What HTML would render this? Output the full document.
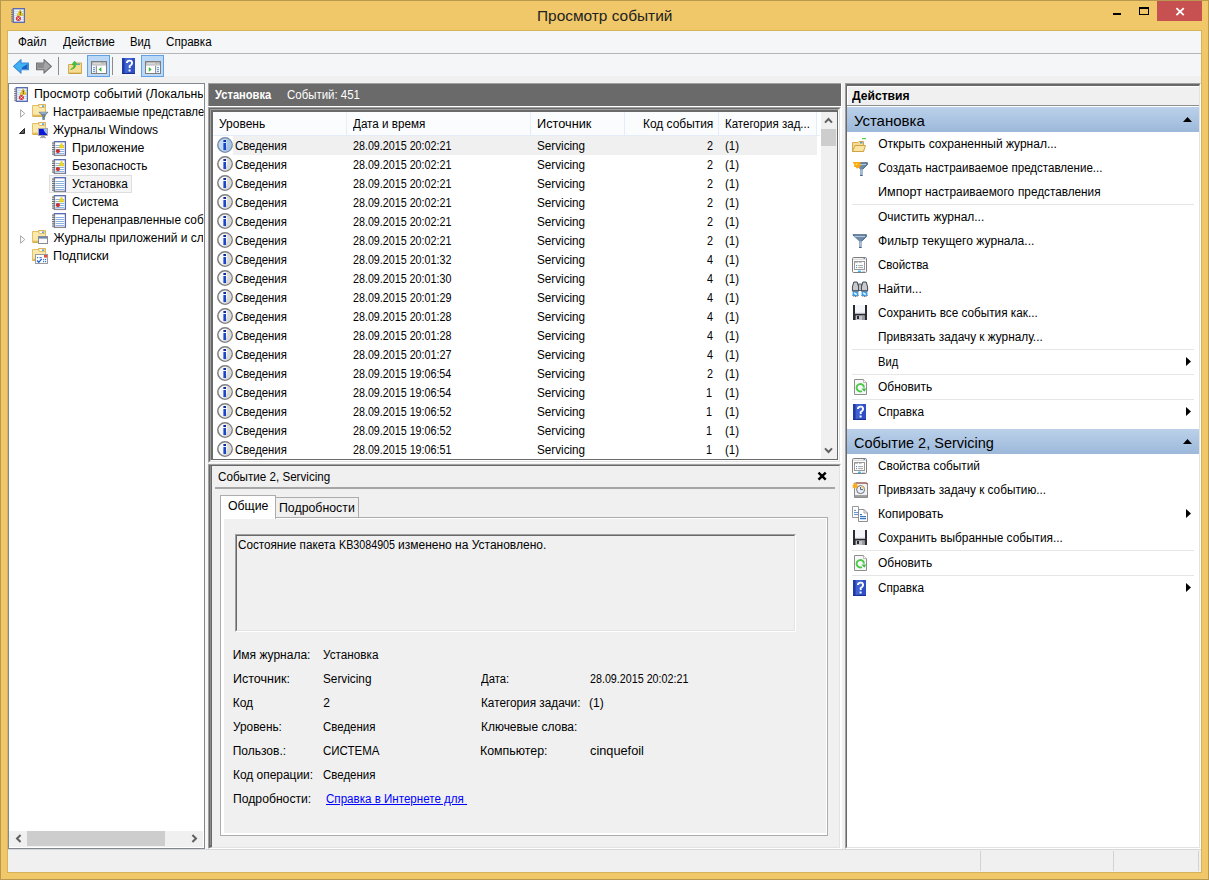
<!DOCTYPE html>
<html lang="ru"><head><meta charset="utf-8"><title>Просмотр событий</title>
<style>
html,body{margin:0;padding:0;width:1209px;height:880px;overflow:hidden;background:#F0C869;}
#win{position:absolute;left:0;top:0;width:1209px;height:880px;overflow:hidden;background:#F0C869;font-family:"Liberation Sans",sans-serif;font-size:12px;color:#000;}
#win div{position:absolute;box-sizing:border-box;}
#win svg{position:absolute;overflow:visible;}
.t{position:absolute;white-space:pre;line-height:16px;height:16px;transform-origin:0 0;}

</style></head>
<body>
<div id="win">
<div style="left:0px;top:0px;width:1209px;height:880px;background:#F0C869;border:1px solid #B8994F;"></div>
<div style="left:7px;top:30px;width:1195px;height:843px;background:#F0F0F0;border:1px solid #D6B25A;"></div>
<svg style="left:11px;top:8px" width="14" height="15" viewBox="0 0 14 15" ><rect x="2.2" y="0.6" width="11.2" height="13.8" fill="#C9D8F0" stroke="#5A6CB0" stroke-width="1.2"/><path d="M3.4 2.5 H12.4" stroke="#F4F8FF" stroke-width="0.9"/><path d="M3.4 4.5 H12.4" stroke="#F4F8FF" stroke-width="0.9"/><path d="M3.4 6.5 H12.4" stroke="#F4F8FF" stroke-width="0.9"/><path d="M3.4 8.5 H12.4" stroke="#F4F8FF" stroke-width="0.9"/><path d="M3.4 10.5 H12.4" stroke="#F4F8FF" stroke-width="0.9"/><path d="M3.4 12.5 H12.4" stroke="#F4F8FF" stroke-width="0.9"/><rect x="0" y="1.6" width="3" height="1.1" fill="#7A7A84"/><rect x="0" y="3.8" width="3" height="1.1" fill="#7A7A84"/><rect x="0" y="6.0" width="3" height="1.1" fill="#7A7A84"/><rect x="0" y="8.2" width="3" height="1.1" fill="#7A7A84"/><rect x="0" y="10.4" width="3" height="1.1" fill="#7A7A84"/><rect x="0" y="12.6" width="3" height="1.1" fill="#7A7A84"/><path d="M9.2 1.8 L12.2 7.3 H6.2 Z" fill="#F8D820" stroke="#D8B000" stroke-width="0.7"/><rect x="8.8" y="3.6" width="0.9" height="2" fill="#222"/><rect x="8.8" y="6" width="0.9" height="0.8" fill="#222"/><circle cx="7.4" cy="10.5" r="2.5" fill="#D63030"/><path d="M6.4 9.5 L8.4 11.5 M8.4 9.5 L6.4 11.5" stroke="#fff" stroke-width="0.9"/></svg>
<div style="left:1157px;top:1px;width:45px;height:20px;background:#C75050;"></div>
<svg style="left:1175px;top:7px" width="10" height="9" viewBox="0 0 10 9"><path d="M1.4 1.2 L8.8 8.2 M8.8 1.2 L1.4 8.2" stroke="#fff" stroke-width="1.8" fill="none"/></svg>
<div style="left:1139px;top:7px;width:10px;height:8px;border:1px solid #000;border-top-width:2px;"></div>
<div style="left:1113px;top:13px;width:8px;height:2px;background:#000;"></div>
<div style="left:8px;top:31px;width:1193px;height:22px;background:#F5F6F7;"></div>
<div style="left:8px;top:53px;width:1193px;height:1px;background:#B6B6B6;"></div>
<div style="left:8px;top:54px;width:1193px;height:22px;background:#F5F6F7;"></div>
<div style="left:58px;top:57px;width:1px;height:18px;background:#8D8D8D;"></div>
<div style="left:112px;top:57px;width:1px;height:18px;background:#8D8D8D;"></div>
<div style="left:87px;top:55px;width:23px;height:22px;background:#BBD9F7;border:1px solid #62A2E4;"></div>
<div style="left:141px;top:55px;width:23px;height:22px;background:#BBD9F7;border:1px solid #62A2E4;"></div>
<svg style="left:13px;top:59px" width="16" height="15" viewBox="0 0 16 15" ><path d="M0.6 7.4 L8 0.6 V4 H15.4 V10.8 H8 V14.2 Z" fill="#3FB2F4" stroke="#3D86D6" stroke-width="1.1" stroke-linejoin="round"/><path d="M9 8.5 L14.5 5 V10 H9 Z" fill="#1C5FC0"/></svg>
<svg style="left:36px;top:59px" width="16" height="15" viewBox="0 0 16 15" ><path d="M15.4 7.4 L8 0.6 V4 H0.6 V10.8 H8 V14.2 Z" fill="#A6A6A6" stroke="#6E6E6E" stroke-width="1.1" stroke-linejoin="round"/><path d="M1.5 5 H8 V9 H1.5 Z" fill="#8C8C8C"/></svg>
<svg style="left:68px;top:61px" width="14" height="13" viewBox="0 0 14 13" ><path d="M0.5 3.5 H5 L6.5 2 H13.5 V12.5 H0.5 Z" fill="#F6DC92" stroke="#D2AA50" stroke-width="1"/><rect x="9.5" y="2.6" width="2.5" height="1.2" fill="#3D8FE8"/><path d="M1 12.2 H13" stroke="#C39A3C" stroke-width="1"/><path d="M2.5 8.5 Q6 7 6 3.5 H4 L6.5 0 L9.5 3.5 H7.8 Q7.5 8 2.5 8.5 Z" fill="#3CC83C" stroke="#28A028" stroke-width="0.5"/></svg>
<svg style="left:91px;top:61px" width="16" height="13" viewBox="0 0 16 13" ><rect x="0.5" y="0.5" width="15" height="12" fill="#fff" stroke="#7E7E7E" stroke-width="1"/><rect x="1" y="1" width="14" height="2.6" fill="#A4A4A4"/><path d="M1.5 2.2 H10.5" stroke="#F0F0F0" stroke-width="1"/><rect x="11.5" y="1.6" width="1" height="1" fill="#fff"/><rect x="13.3" y="1.6" width="1" height="1" fill="#fff"/><path d="M1 4.4 H15" stroke="#C8C8C8" stroke-width="0.8"/><path d="M5.3 4.8 V12" stroke="#7E7E7E" stroke-width="1"/><rect x="2" y="6.2" width="2" height="1" fill="#4A86D8"/><rect x="2" y="8.2" width="2" height="1" fill="#4A86D8"/><rect x="2" y="10.2" width="2" height="1" fill="#4A86D8"/><path d="M7.6 8.4 L10.4 6 V10.8 Z" fill="#2DB82D"/><rect x="6" y="5" width="9" height="7" fill="none"/></svg>
<svg style="left:122px;top:58px" width="13" height="16" viewBox="0 0 13 16" ><rect x="0" y="0" width="13" height="16" fill="#3E62D2"/><rect x="0" y="0" width="2.6" height="16" fill="#1F3CA8"/><path d="M10 0 H13 V16 H3 Q11 12 10 0 Z" fill="#2E50C4"/><rect x="0" y="15" width="13" height="1" fill="#1A3090"/><path d="M4.9 5 Q5.1 2.6 7.5 2.6 Q10.1 2.6 10.1 5 Q10.1 6.8 7.7 8 V10" stroke="#fff" stroke-width="1.9" fill="none"/><rect x="6.6" y="11.5" width="2" height="2" fill="#fff"/></svg>
<svg style="left:145px;top:61px" width="16" height="13" viewBox="0 0 16 13" ><rect x="0.5" y="0.5" width="15" height="12" fill="#fff" stroke="#7E7E7E" stroke-width="1"/><rect x="1" y="1" width="14" height="2.6" fill="#A4A4A4"/><path d="M1.5 2.2 H10.5" stroke="#F0F0F0" stroke-width="1"/><rect x="11.5" y="1.6" width="1" height="1" fill="#fff"/><rect x="13.3" y="1.6" width="1" height="1" fill="#fff"/><path d="M1 4.4 H15" stroke="#C8C8C8" stroke-width="0.8"/><path d="M10.7 4.8 V12" stroke="#7E7E7E" stroke-width="1"/><rect x="12" y="6.2" width="2" height="1" fill="#4A86D8"/><rect x="12" y="8.2" width="2" height="1" fill="#4A86D8"/><rect x="12" y="10.2" width="2" height="1" fill="#4A86D8"/><path d="M6.6 8.4 L3.8 6 V10.8 Z" fill="#2DB82D"/></svg>
<div style="left:8px;top:83px;width:197px;height:766px;background:#fff;border:1px solid #828790;"></div>
<div style="left:9px;top:831px;width:194px;height:16px;background:#F0F0F0;"></div>
<div style="left:27px;top:831px;width:138px;height:15px;background:#CDCDCD;"></div>
<svg style="left:15px;top:834px" width="7" height="9" viewBox="0 0 7 9"><path d="M5.6 1 L2 4.5 L5.6 8" stroke="#606060" stroke-width="2" fill="none"/></svg>
<svg style="left:191px;top:834px" width="7" height="9" viewBox="0 0 7 9"><path d="M1.4 1 L5 4.5 L1.4 8" stroke="#606060" stroke-width="2" fill="none"/></svg>
<div style="left:49px;top:175px;width:83px;height:18px;background:#F5F5F5;border:1px solid #DEDEDE;"></div>
<svg style="left:14px;top:87px" width="14" height="15" viewBox="0 0 14 15" ><rect x="2.2" y="0.6" width="11.2" height="13.8" fill="#C9D8F0" stroke="#5A6CB0" stroke-width="1.2"/><path d="M3.4 2.5 H12.4" stroke="#F4F8FF" stroke-width="0.9"/><path d="M3.4 4.5 H12.4" stroke="#F4F8FF" stroke-width="0.9"/><path d="M3.4 6.5 H12.4" stroke="#F4F8FF" stroke-width="0.9"/><path d="M3.4 8.5 H12.4" stroke="#F4F8FF" stroke-width="0.9"/><path d="M3.4 10.5 H12.4" stroke="#F4F8FF" stroke-width="0.9"/><path d="M3.4 12.5 H12.4" stroke="#F4F8FF" stroke-width="0.9"/><rect x="0" y="1.6" width="3" height="1.1" fill="#7A7A84"/><rect x="0" y="3.8" width="3" height="1.1" fill="#7A7A84"/><rect x="0" y="6.0" width="3" height="1.1" fill="#7A7A84"/><rect x="0" y="8.2" width="3" height="1.1" fill="#7A7A84"/><rect x="0" y="10.4" width="3" height="1.1" fill="#7A7A84"/><rect x="0" y="12.6" width="3" height="1.1" fill="#7A7A84"/><path d="M9.2 1.8 L12.2 7.3 H6.2 Z" fill="#F8D820" stroke="#D8B000" stroke-width="0.7"/><rect x="8.8" y="3.6" width="0.9" height="2" fill="#222"/><rect x="8.8" y="6" width="0.9" height="0.8" fill="#222"/><circle cx="7.4" cy="10.5" r="2.5" fill="#D63030"/><path d="M6.4 9.5 L8.4 11.5 M8.4 9.5 L6.4 11.5" stroke="#fff" stroke-width="0.9"/></svg>
<svg style="left:32px;top:104px" width="16" height="16" viewBox="0 0 16 16" ><path d="M6.5 0.5 H13.5 V4 H6.5 Z" fill="#F3D88A" stroke="#D9B65E" stroke-width="1"/><rect x="7.6" y="1.4" width="4.6" height="1.6" fill="#fff"/><rect x="10" y="1.5" width="2" height="1.3" fill="#3D8FE8"/><path d="M0.5 1.5 H6 L7.5 3.5 H13.5 V12.5 H0.5 Z" fill="#FBE9AC" stroke="#E2C068" stroke-width="1"/><path d="M1 10 H13 V12 H1 Z" fill="#F5D98C"/><path d="M1 12 H13" stroke="#C99E3E" stroke-width="1"/><path d="M7 8.2 H16 L12.5 12 V15.6 H10.7 V12 Z" fill="#6F8CA8" stroke="#4D6782" stroke-width="0.6"/><path d="M8.5 9 H14.5" stroke="#C8D8E8" stroke-width="0.8"/></svg>
<svg style="left:32px;top:122px" width="16" height="16" viewBox="0 0 16 16" ><path d="M6.5 0.5 H13.5 V4 H6.5 Z" fill="#F3D88A" stroke="#D9B65E" stroke-width="1"/><rect x="7.6" y="1.4" width="4.6" height="1.6" fill="#fff"/><rect x="10" y="1.5" width="2" height="1.3" fill="#3D8FE8"/><path d="M0.5 1.5 H6 L7.5 3.5 H13.5 V12.5 H0.5 Z" fill="#FBE9AC" stroke="#E2C068" stroke-width="1"/><path d="M1 10 H13 V12 H1 Z" fill="#F5D98C"/><path d="M1 12 H13" stroke="#C99E3E" stroke-width="1"/><rect x="6.5" y="6.5" width="9" height="7" fill="#0A18D8" stroke="#A8A8A8" stroke-width="1"/><path d="M11.5 7 H15 V12 Q12.5 11 11.5 7 Z" fill="#9DB8F5"/><path d="M9 14.5 H13 M8 15.6 H14" stroke="#9A9A9A" stroke-width="0.9"/></svg>
<svg style="left:52px;top:141px" width="14" height="15" viewBox="0 0 14 15" ><rect x="2.4" y="0.7" width="11" height="13.7" fill="#fff" stroke="#5568B0" stroke-width="1.3"/><path d="M2.4 14.5 H13.4" stroke="#8A8A8A" stroke-width="1"/><path d="M2.6 1.4 V14" stroke="#B0B0B0" stroke-width="0.8"/><path d="M3.5 4.5 H12" stroke="#8DB4DC" stroke-width="1"/><path d="M3.5 6.5 H12" stroke="#8DB4DC" stroke-width="1"/><path d="M3.5 8.5 H12" stroke="#8DB4DC" stroke-width="1"/><path d="M3.5 10.5 H12" stroke="#8DB4DC" stroke-width="1"/><path d="M3.5 12.5 H12" stroke="#8DB4DC" stroke-width="1"/><rect x="0" y="1.5" width="3" height="1.2" fill="#6E6E6E"/><rect x="0" y="3.7" width="3" height="1.2" fill="#6E6E6E"/><rect x="0" y="5.9" width="3" height="1.2" fill="#6E6E6E"/><rect x="0" y="8.1" width="3" height="1.2" fill="#6E6E6E"/><rect x="0" y="10.3" width="3" height="1.2" fill="#6E6E6E"/><rect x="0" y="12.5" width="3" height="1.2" fill="#6E6E6E"/><path d="M9.5 2 L12 6.8 H7 Z" fill="#F7DE1E" stroke="#E0C000" stroke-width="0.6"/><circle cx="5.9" cy="10.1" r="2.1" fill="#CC3030"/></svg>
<svg style="left:52px;top:159px" width="14" height="15" viewBox="0 0 14 15" ><rect x="2.4" y="0.7" width="11" height="13.7" fill="#fff" stroke="#5568B0" stroke-width="1.3"/><path d="M2.4 14.5 H13.4" stroke="#8A8A8A" stroke-width="1"/><path d="M2.6 1.4 V14" stroke="#B0B0B0" stroke-width="0.8"/><path d="M3.5 4.5 H12" stroke="#8DB4DC" stroke-width="1"/><path d="M3.5 6.5 H12" stroke="#8DB4DC" stroke-width="1"/><path d="M3.5 8.5 H12" stroke="#8DB4DC" stroke-width="1"/><path d="M3.5 10.5 H12" stroke="#8DB4DC" stroke-width="1"/><path d="M3.5 12.5 H12" stroke="#8DB4DC" stroke-width="1"/><rect x="0" y="1.5" width="3" height="1.2" fill="#6E6E6E"/><rect x="0" y="3.7" width="3" height="1.2" fill="#6E6E6E"/><rect x="0" y="5.9" width="3" height="1.2" fill="#6E6E6E"/><rect x="0" y="8.1" width="3" height="1.2" fill="#6E6E6E"/><rect x="0" y="10.3" width="3" height="1.2" fill="#6E6E6E"/><rect x="0" y="12.5" width="3" height="1.2" fill="#6E6E6E"/><path d="M9.5 2 L12 6.8 H7 Z" fill="#F7DE1E" stroke="#E0C000" stroke-width="0.6"/><circle cx="5.9" cy="10.1" r="2.1" fill="#CC3030"/></svg>
<svg style="left:52px;top:177px" width="14" height="15" viewBox="0 0 14 15" ><rect x="2.4" y="0.7" width="11" height="13.7" fill="#fff" stroke="#5568B0" stroke-width="1.3"/><path d="M2.4 14.5 H13.4" stroke="#8A8A8A" stroke-width="1"/><path d="M2.6 1.4 V14" stroke="#B0B0B0" stroke-width="0.8"/><path d="M3.5 4.5 H12" stroke="#8DB4DC" stroke-width="1"/><path d="M3.5 6.5 H12" stroke="#8DB4DC" stroke-width="1"/><path d="M3.5 8.5 H12" stroke="#8DB4DC" stroke-width="1"/><path d="M3.5 10.5 H12" stroke="#8DB4DC" stroke-width="1"/><path d="M3.5 12.5 H12" stroke="#8DB4DC" stroke-width="1"/><rect x="0" y="1.5" width="3" height="1.2" fill="#6E6E6E"/><rect x="0" y="3.7" width="3" height="1.2" fill="#6E6E6E"/><rect x="0" y="5.9" width="3" height="1.2" fill="#6E6E6E"/><rect x="0" y="8.1" width="3" height="1.2" fill="#6E6E6E"/><rect x="0" y="10.3" width="3" height="1.2" fill="#6E6E6E"/><rect x="0" y="12.5" width="3" height="1.2" fill="#6E6E6E"/></svg>
<svg style="left:52px;top:195px" width="14" height="15" viewBox="0 0 14 15" ><rect x="2.4" y="0.7" width="11" height="13.7" fill="#fff" stroke="#5568B0" stroke-width="1.3"/><path d="M2.4 14.5 H13.4" stroke="#8A8A8A" stroke-width="1"/><path d="M2.6 1.4 V14" stroke="#B0B0B0" stroke-width="0.8"/><path d="M3.5 4.5 H12" stroke="#8DB4DC" stroke-width="1"/><path d="M3.5 6.5 H12" stroke="#8DB4DC" stroke-width="1"/><path d="M3.5 8.5 H12" stroke="#8DB4DC" stroke-width="1"/><path d="M3.5 10.5 H12" stroke="#8DB4DC" stroke-width="1"/><path d="M3.5 12.5 H12" stroke="#8DB4DC" stroke-width="1"/><rect x="0" y="1.5" width="3" height="1.2" fill="#6E6E6E"/><rect x="0" y="3.7" width="3" height="1.2" fill="#6E6E6E"/><rect x="0" y="5.9" width="3" height="1.2" fill="#6E6E6E"/><rect x="0" y="8.1" width="3" height="1.2" fill="#6E6E6E"/><rect x="0" y="10.3" width="3" height="1.2" fill="#6E6E6E"/><rect x="0" y="12.5" width="3" height="1.2" fill="#6E6E6E"/><path d="M9.5 2 L12 6.8 H7 Z" fill="#F7DE1E" stroke="#E0C000" stroke-width="0.6"/><circle cx="5.9" cy="10.1" r="2.1" fill="#CC3030"/></svg>
<svg style="left:52px;top:213px" width="14" height="15" viewBox="0 0 14 15" ><rect x="2.4" y="0.7" width="11" height="13.7" fill="#fff" stroke="#5568B0" stroke-width="1.3"/><path d="M2.4 14.5 H13.4" stroke="#8A8A8A" stroke-width="1"/><path d="M2.6 1.4 V14" stroke="#B0B0B0" stroke-width="0.8"/><path d="M3.5 4.5 H12" stroke="#8DB4DC" stroke-width="1"/><path d="M3.5 6.5 H12" stroke="#8DB4DC" stroke-width="1"/><path d="M3.5 8.5 H12" stroke="#8DB4DC" stroke-width="1"/><path d="M3.5 10.5 H12" stroke="#8DB4DC" stroke-width="1"/><path d="M3.5 12.5 H12" stroke="#8DB4DC" stroke-width="1"/><rect x="0" y="1.5" width="3" height="1.2" fill="#6E6E6E"/><rect x="0" y="3.7" width="3" height="1.2" fill="#6E6E6E"/><rect x="0" y="5.9" width="3" height="1.2" fill="#6E6E6E"/><rect x="0" y="8.1" width="3" height="1.2" fill="#6E6E6E"/><rect x="0" y="10.3" width="3" height="1.2" fill="#6E6E6E"/><rect x="0" y="12.5" width="3" height="1.2" fill="#6E6E6E"/></svg>
<svg style="left:32px;top:230px" width="16" height="16" viewBox="0 0 16 16" ><path d="M6.5 0.5 H13.5 V4 H6.5 Z" fill="#F3D88A" stroke="#D9B65E" stroke-width="1"/><rect x="7.6" y="1.4" width="4.6" height="1.6" fill="#fff"/><rect x="10" y="1.5" width="2" height="1.3" fill="#3D8FE8"/><path d="M0.5 1.5 H6 L7.5 3.5 H13.5 V12.5 H0.5 Z" fill="#FBE9AC" stroke="#E2C068" stroke-width="1"/><path d="M1 10 H13 V12 H1 Z" fill="#F5D98C"/><path d="M1 12 H13" stroke="#C99E3E" stroke-width="1"/><rect x="6.5" y="6.5" width="9" height="7" fill="#FAFAFC" stroke="#8A8A94" stroke-width="1"/><rect x="7" y="7" width="8" height="1.6" fill="#6F86A8"/></svg>
<svg style="left:32px;top:248px" width="16" height="16" viewBox="0 0 16 16" ><path d="M6.5 0.5 H13.5 V4 H6.5 Z" fill="#F3D88A" stroke="#D9B65E" stroke-width="1"/><rect x="7.6" y="1.4" width="4.6" height="1.6" fill="#fff"/><rect x="10" y="1.5" width="2" height="1.3" fill="#3D8FE8"/><path d="M0.5 1.5 H6 L7.5 3.5 H13.5 V12.5 H0.5 Z" fill="#FBE9AC" stroke="#E2C068" stroke-width="1"/><path d="M1 10 H13 V12 H1 Z" fill="#F5D98C"/><path d="M1 12 H13" stroke="#C99E3E" stroke-width="1"/><rect x="3.5" y="6.5" width="12" height="9" fill="#fff" stroke="#9A9A9A" stroke-width="1"/><rect x="12" y="7" width="3" height="2.6" fill="#E84A3A"/><rect x="5" y="9" width="1.2" height="1.2" fill="#3A78D0"/><rect x="7.4" y="9.1" width="2.4" height="1" fill="#3A78D0"/><rect x="11" y="11" width="1.2" height="1.2" fill="#3A78D0"/><rect x="13" y="11" width="1.2" height="1.2" fill="#3A78D0"/><rect x="11" y="13" width="1.2" height="1.2" fill="#3A78D0"/><rect x="13" y="13" width="1.2" height="1.2" fill="#3A78D0"/><path d="M5 12.5 L6.8 14.3 L9.6 10.8" stroke="#2060C8" stroke-width="1.3" fill="none"/></svg>
<svg style="left:20px;top:109px" width="6" height="9" viewBox="0 0 6 9"><path d="M0.6 0.8 L4.8 4.5 L0.6 8.2 Z" fill="#fff" stroke="#A6A6A6" stroke-width="1"/></svg>
<svg style="left:20px;top:235px" width="6" height="9" viewBox="0 0 6 9"><path d="M0.6 0.8 L4.8 4.5 L0.6 8.2 Z" fill="#fff" stroke="#A6A6A6" stroke-width="1"/></svg>
<svg style="left:19px;top:128px" width="6" height="6" viewBox="0 0 6 6"><path d="M5.5 0.5 V5.5 H0.5 Z" fill="#595959" stroke="#262626" stroke-width="1"/></svg>
<div style="left:205px;top:83px;width:3px;height:766px;background:#F6F6F6;"></div>
<div style="left:841px;top:83px;width:4px;height:766px;background:#F0F0F0;border-left:1px solid #fff;"></div>
<div style="left:208px;top:83px;width:633px;height:23px;background:#6A6A6A;border-left:1px solid #A0A0A0;border-top:1px solid #A0A0A0;"></div>
<div style="left:208px;top:106px;width:633px;height:1px;background:#fff;"></div>
<div style="left:208px;top:107px;width:633px;height:356px;background:#fff;border-top:1px solid #A0A0A0;border-left:1px solid #A0A0A0;border-right:1px solid #fff;border-bottom:1px solid #fff;"></div>
<div style="left:209px;top:108px;width:631px;height:354px;border-top:1px solid #696969;border-left:1px solid #696969;border-right:1px solid #E3E3E3;border-bottom:1px solid #E3E3E3;"></div>
<div style="left:210px;top:109px;width:629px;height:352px;border-top:1px solid #A0A0A0;border-left:1px solid #A0A0A0;border-right:1px solid #fff;border-bottom:1px solid #fff;"></div>
<div style="left:211px;top:110px;width:627px;height:350px;border-top:2px solid #696969;border-left:2px solid #696969;border-right:1px solid #696969;border-bottom:1px solid #696969;"></div>
<div style="left:821px;top:112px;width:16px;height:347px;background:#F0F0F0;"></div>
<div style="left:213px;top:112px;width:604px;height:23px;background:#FBFCFE;"></div>
<div style="left:346px;top:112px;width:1px;height:23px;background:#E5EEF8;"></div>
<div style="left:530px;top:112px;width:1px;height:23px;background:#E5EEF8;"></div>
<div style="left:624px;top:112px;width:1px;height:23px;background:#E5EEF8;"></div>
<div style="left:718px;top:112px;width:1px;height:23px;background:#E5EEF8;"></div>
<div style="left:816px;top:112px;width:1px;height:23px;background:#E5EEF8;"></div>
<div style="left:213px;top:135px;width:607px;height:1px;background:#E5EEF8;"></div>
<div style="left:233px;top:136px;width:584px;height:19px;background:#F0F0F0;"></div>
<svg style="left:217px;top:137px" width="16" height="16" viewBox="0 0 16 16" ><circle cx="8" cy="8" r="7.2" fill="#C2DAF3" stroke="#7A8FAA" stroke-width="1.5"/><path d="M9.5 1.8 A6.4 6.4 0 0 1 14.4 8 A6.4 6.4 0 0 1 6 14.1 Q12.5 10 9.5 1.8 Z" fill="#A6C4E6"/><rect x="6.4" y="3" width="2.6" height="2" fill="#0A2AA0"/><rect x="6.4" y="6" width="2.6" height="7" fill="#1A48C8"/></svg>
<svg style="left:217px;top:156px" width="16" height="16" viewBox="0 0 16 16" ><circle cx="8" cy="8" r="7.2" fill="#F6F6F6" stroke="#7F7F7F" stroke-width="1.5"/><path d="M9.5 1.8 A6.4 6.4 0 0 1 14.4 8 A6.4 6.4 0 0 1 6 14.1 Q12.5 10 9.5 1.8 Z" fill="#DADADA"/><rect x="6.4" y="3" width="2.6" height="2" fill="#0A2AA0"/><rect x="6.4" y="6" width="2.6" height="7" fill="#1A48C8"/></svg>
<svg style="left:217px;top:175px" width="16" height="16" viewBox="0 0 16 16" ><circle cx="8" cy="8" r="7.2" fill="#F6F6F6" stroke="#7F7F7F" stroke-width="1.5"/><path d="M9.5 1.8 A6.4 6.4 0 0 1 14.4 8 A6.4 6.4 0 0 1 6 14.1 Q12.5 10 9.5 1.8 Z" fill="#DADADA"/><rect x="6.4" y="3" width="2.6" height="2" fill="#0A2AA0"/><rect x="6.4" y="6" width="2.6" height="7" fill="#1A48C8"/></svg>
<svg style="left:217px;top:194px" width="16" height="16" viewBox="0 0 16 16" ><circle cx="8" cy="8" r="7.2" fill="#F6F6F6" stroke="#7F7F7F" stroke-width="1.5"/><path d="M9.5 1.8 A6.4 6.4 0 0 1 14.4 8 A6.4 6.4 0 0 1 6 14.1 Q12.5 10 9.5 1.8 Z" fill="#DADADA"/><rect x="6.4" y="3" width="2.6" height="2" fill="#0A2AA0"/><rect x="6.4" y="6" width="2.6" height="7" fill="#1A48C8"/></svg>
<svg style="left:217px;top:213px" width="16" height="16" viewBox="0 0 16 16" ><circle cx="8" cy="8" r="7.2" fill="#F6F6F6" stroke="#7F7F7F" stroke-width="1.5"/><path d="M9.5 1.8 A6.4 6.4 0 0 1 14.4 8 A6.4 6.4 0 0 1 6 14.1 Q12.5 10 9.5 1.8 Z" fill="#DADADA"/><rect x="6.4" y="3" width="2.6" height="2" fill="#0A2AA0"/><rect x="6.4" y="6" width="2.6" height="7" fill="#1A48C8"/></svg>
<svg style="left:217px;top:232px" width="16" height="16" viewBox="0 0 16 16" ><circle cx="8" cy="8" r="7.2" fill="#F6F6F6" stroke="#7F7F7F" stroke-width="1.5"/><path d="M9.5 1.8 A6.4 6.4 0 0 1 14.4 8 A6.4 6.4 0 0 1 6 14.1 Q12.5 10 9.5 1.8 Z" fill="#DADADA"/><rect x="6.4" y="3" width="2.6" height="2" fill="#0A2AA0"/><rect x="6.4" y="6" width="2.6" height="7" fill="#1A48C8"/></svg>
<svg style="left:217px;top:251px" width="16" height="16" viewBox="0 0 16 16" ><circle cx="8" cy="8" r="7.2" fill="#F6F6F6" stroke="#7F7F7F" stroke-width="1.5"/><path d="M9.5 1.8 A6.4 6.4 0 0 1 14.4 8 A6.4 6.4 0 0 1 6 14.1 Q12.5 10 9.5 1.8 Z" fill="#DADADA"/><rect x="6.4" y="3" width="2.6" height="2" fill="#0A2AA0"/><rect x="6.4" y="6" width="2.6" height="7" fill="#1A48C8"/></svg>
<svg style="left:217px;top:270px" width="16" height="16" viewBox="0 0 16 16" ><circle cx="8" cy="8" r="7.2" fill="#F6F6F6" stroke="#7F7F7F" stroke-width="1.5"/><path d="M9.5 1.8 A6.4 6.4 0 0 1 14.4 8 A6.4 6.4 0 0 1 6 14.1 Q12.5 10 9.5 1.8 Z" fill="#DADADA"/><rect x="6.4" y="3" width="2.6" height="2" fill="#0A2AA0"/><rect x="6.4" y="6" width="2.6" height="7" fill="#1A48C8"/></svg>
<svg style="left:217px;top:289px" width="16" height="16" viewBox="0 0 16 16" ><circle cx="8" cy="8" r="7.2" fill="#F6F6F6" stroke="#7F7F7F" stroke-width="1.5"/><path d="M9.5 1.8 A6.4 6.4 0 0 1 14.4 8 A6.4 6.4 0 0 1 6 14.1 Q12.5 10 9.5 1.8 Z" fill="#DADADA"/><rect x="6.4" y="3" width="2.6" height="2" fill="#0A2AA0"/><rect x="6.4" y="6" width="2.6" height="7" fill="#1A48C8"/></svg>
<svg style="left:217px;top:308px" width="16" height="16" viewBox="0 0 16 16" ><circle cx="8" cy="8" r="7.2" fill="#F6F6F6" stroke="#7F7F7F" stroke-width="1.5"/><path d="M9.5 1.8 A6.4 6.4 0 0 1 14.4 8 A6.4 6.4 0 0 1 6 14.1 Q12.5 10 9.5 1.8 Z" fill="#DADADA"/><rect x="6.4" y="3" width="2.6" height="2" fill="#0A2AA0"/><rect x="6.4" y="6" width="2.6" height="7" fill="#1A48C8"/></svg>
<svg style="left:217px;top:327px" width="16" height="16" viewBox="0 0 16 16" ><circle cx="8" cy="8" r="7.2" fill="#F6F6F6" stroke="#7F7F7F" stroke-width="1.5"/><path d="M9.5 1.8 A6.4 6.4 0 0 1 14.4 8 A6.4 6.4 0 0 1 6 14.1 Q12.5 10 9.5 1.8 Z" fill="#DADADA"/><rect x="6.4" y="3" width="2.6" height="2" fill="#0A2AA0"/><rect x="6.4" y="6" width="2.6" height="7" fill="#1A48C8"/></svg>
<svg style="left:217px;top:346px" width="16" height="16" viewBox="0 0 16 16" ><circle cx="8" cy="8" r="7.2" fill="#F6F6F6" stroke="#7F7F7F" stroke-width="1.5"/><path d="M9.5 1.8 A6.4 6.4 0 0 1 14.4 8 A6.4 6.4 0 0 1 6 14.1 Q12.5 10 9.5 1.8 Z" fill="#DADADA"/><rect x="6.4" y="3" width="2.6" height="2" fill="#0A2AA0"/><rect x="6.4" y="6" width="2.6" height="7" fill="#1A48C8"/></svg>
<svg style="left:217px;top:365px" width="16" height="16" viewBox="0 0 16 16" ><circle cx="8" cy="8" r="7.2" fill="#F6F6F6" stroke="#7F7F7F" stroke-width="1.5"/><path d="M9.5 1.8 A6.4 6.4 0 0 1 14.4 8 A6.4 6.4 0 0 1 6 14.1 Q12.5 10 9.5 1.8 Z" fill="#DADADA"/><rect x="6.4" y="3" width="2.6" height="2" fill="#0A2AA0"/><rect x="6.4" y="6" width="2.6" height="7" fill="#1A48C8"/></svg>
<svg style="left:217px;top:384px" width="16" height="16" viewBox="0 0 16 16" ><circle cx="8" cy="8" r="7.2" fill="#F6F6F6" stroke="#7F7F7F" stroke-width="1.5"/><path d="M9.5 1.8 A6.4 6.4 0 0 1 14.4 8 A6.4 6.4 0 0 1 6 14.1 Q12.5 10 9.5 1.8 Z" fill="#DADADA"/><rect x="6.4" y="3" width="2.6" height="2" fill="#0A2AA0"/><rect x="6.4" y="6" width="2.6" height="7" fill="#1A48C8"/></svg>
<svg style="left:217px;top:403px" width="16" height="16" viewBox="0 0 16 16" ><circle cx="8" cy="8" r="7.2" fill="#F6F6F6" stroke="#7F7F7F" stroke-width="1.5"/><path d="M9.5 1.8 A6.4 6.4 0 0 1 14.4 8 A6.4 6.4 0 0 1 6 14.1 Q12.5 10 9.5 1.8 Z" fill="#DADADA"/><rect x="6.4" y="3" width="2.6" height="2" fill="#0A2AA0"/><rect x="6.4" y="6" width="2.6" height="7" fill="#1A48C8"/></svg>
<svg style="left:217px;top:422px" width="16" height="16" viewBox="0 0 16 16" ><circle cx="8" cy="8" r="7.2" fill="#F6F6F6" stroke="#7F7F7F" stroke-width="1.5"/><path d="M9.5 1.8 A6.4 6.4 0 0 1 14.4 8 A6.4 6.4 0 0 1 6 14.1 Q12.5 10 9.5 1.8 Z" fill="#DADADA"/><rect x="6.4" y="3" width="2.6" height="2" fill="#0A2AA0"/><rect x="6.4" y="6" width="2.6" height="7" fill="#1A48C8"/></svg>
<svg style="left:217px;top:441px" width="16" height="16" viewBox="0 0 16 16" ><circle cx="8" cy="8" r="7.2" fill="#F6F6F6" stroke="#7F7F7F" stroke-width="1.5"/><path d="M9.5 1.8 A6.4 6.4 0 0 1 14.4 8 A6.4 6.4 0 0 1 6 14.1 Q12.5 10 9.5 1.8 Z" fill="#DADADA"/><rect x="6.4" y="3" width="2.6" height="2" fill="#0A2AA0"/><rect x="6.4" y="6" width="2.6" height="7" fill="#1A48C8"/></svg>
<div style="left:821px;top:129px;width:15px;height:17px;background:#CDCDCD;"></div>
<svg style="left:824px;top:117px" width="9" height="7" viewBox="0 0 9 7"><path d="M1 5.6 L4.5 2 L8 5.6" stroke="#606060" stroke-width="2" fill="none"/></svg>
<svg style="left:824px;top:447px" width="9" height="7" viewBox="0 0 9 7"><path d="M1 1.4 L4.5 5 L8 1.4" stroke="#606060" stroke-width="2" fill="none"/></svg>
<div style="left:208px;top:464px;width:633px;height:385px;border-top:1px solid #A0A0A0;border-left:1px solid #A0A0A0;border-right:1px solid #fff;border-bottom:1px solid #fff;"></div>
<div style="left:209px;top:465px;width:631px;height:383px;border-top:1px solid #696969;border-left:3px solid #696969;border-right:1px solid #E3E3E3;border-bottom:1px solid #E3E3E3;"></div>
<div style="left:210px;top:466px;width:1px;height:379px;background:#8C8C8C;"></div>
<svg style="left:817px;top:471px" width="10" height="10" viewBox="0 0 10 10"><path d="M1.5 1.6 L8.7 8.6 M8.7 1.6 L1.5 8.6" stroke="#000" stroke-width="2.5" fill="none"/></svg>
<div style="left:215px;top:487px;width:620px;height:2px;background:#A6A6A6;"></div>
<div style="left:220px;top:517px;width:608px;height:319px;background:#F0F0F0;border:1px solid #ACACAC;box-shadow:inset 3px 1px 0 #fff, inset -1px -2px 0 #fff;"></div>
<div style="left:275px;top:497px;width:84px;height:21px;background:#F0F0F0;border:1px solid #ACACAC;"></div>
<div style="left:220px;top:495px;width:56px;height:24px;background:#fff;border:1px solid #ACACAC;border-bottom:none;"></div>
<div style="left:235px;top:534px;width:561px;height:98px;border-top:1px solid #A0A0A0;border-left:1px solid #A0A0A0;border-right:1px solid #fff;border-bottom:1px solid #fff;"></div>
<div style="left:236px;top:535px;width:559px;height:96px;border-top:1px solid #696969;border-left:1px solid #696969;border-right:1px solid #E3E3E3;border-bottom:1px solid #E3E3E3;"></div>
<div style="left:845px;top:83px;width:356px;height:766px;background:#fff;border-top:1px solid #A0A0A0;border-left:1px solid #A0A0A0;border-right:1px solid #fff;border-bottom:1px solid #fff;"></div>
<div style="left:846px;top:84px;width:354px;height:764px;border-top:2px solid #696969;border-left:1px solid #696969;border-right:1px solid #E3E3E3;border-bottom:1px solid #E3E3E3;"></div>
<div style="left:848px;top:87px;width:351px;height:18px;background:#F0F0F0;"></div>
<div style="left:847px;top:105px;width:352px;height:1px;background:#8E8E8E;"></div>
<div style="left:847px;top:107px;width:352px;height:25px;background:linear-gradient(#BBD1EA,#9CB8DA);"></div>
<div style="left:847px;top:429px;width:352px;height:25px;background:linear-gradient(#BBD1EA,#9CB8DA);"></div>
<svg style="left:1183px;top:117px" width="9" height="5" viewBox="0 0 9 5"><path d="M0 5 L4.5 0 L9 5 Z" fill="#000"/></svg>
<svg style="left:1183px;top:439px" width="9" height="5" viewBox="0 0 9 5"><path d="M0 5 L4.5 0 L9 5 Z" fill="#000"/></svg>
<svg style="left:852px;top:141px" width="14" height="11" viewBox="0 0 14 11" ><rect x="10" y="-3" width="4" height="1.2" fill="#48D848"/><path d="M0.5 1.5 H6 L7 0.5 H11.5 V10.5 H0.5 Z" fill="#F5DC92" stroke="#D1A94E" stroke-width="1"/><rect x="8" y="1.2" width="2.6" height="1.2" fill="#3D8FE8"/><path d="M0.5 10.5 L3 4.5 H13.5 L11.5 10.5 Z" fill="#F9E4A0" stroke="#CFA448" stroke-width="1"/></svg>
<svg style="left:853px;top:162px" width="16" height="14" viewBox="0 0 16 14" ><path d="M0.3 0.4 H15 V2 L9.6 7.2 V13 L7.2 14 V7.2 L1.2 2 Z" fill="#6E8CAA"/><path d="M1 1 H14.5" stroke="#3E5A78" stroke-width="1.2"/><path d="M2.5 2.3 H13" stroke="#C5D6E8" stroke-width="1"/><path d="M9.6 7.2 L14.6 2.2" stroke="#3E5A78" stroke-width="1"/><path d="M8.2 7.5 V12.8" stroke="#D0DCEA" stroke-width="0.9"/><rect x="7.2" y="13" width="2.4" height="1" fill="#3E5A78"/><path d="M0 0 H8 L7 2 L8.6 3.6 L6.6 4.2 L7 6.4 L5 5.4 L4.2 7 L2.6 5 L1 5 L1.4 3 Z" fill="#FBA818"/><rect x="2.6" y="1.4" width="2" height="1.6" fill="#FFE040"/></svg>
<svg style="left:852px;top:234px" width="16" height="14" viewBox="0 0 16 14" ><path d="M0.3 0.4 H15 V2 L9.6 7.2 V13 L7.2 14 V7.2 L1.2 2 Z" fill="#6E8CAA"/><path d="M1 1 H14.5" stroke="#3E5A78" stroke-width="1.2"/><path d="M2.5 2.3 H13" stroke="#C5D6E8" stroke-width="1"/><path d="M9.6 7.2 L14.6 2.2" stroke="#3E5A78" stroke-width="1"/><path d="M8.2 7.5 V12.8" stroke="#D0DCEA" stroke-width="0.9"/><rect x="7.2" y="13" width="2.4" height="1" fill="#3E5A78"/></svg>
<svg style="left:852px;top:257px" width="15" height="16" viewBox="0 0 15 16" ><rect x="0.5" y="0.5" width="14" height="15" rx="1.2" fill="#FDFDFD" stroke="#7F7F7F" stroke-width="1"/><path d="M1 2.2 H14" stroke="#C8C8C8" stroke-width="0.8"/><rect x="11.6" y="0.8" width="1.4" height="1.2" fill="#5C86C8"/><rect x="2.5" y="4.5" width="10" height="8" fill="#fff" stroke="#9A9A9A" stroke-width="1"/><path d="M3 5.6 H6 M7 5.6 H9.6" stroke="#BDBDBD" stroke-width="1"/><rect x="4" y="8" width="1.1" height="1.1" fill="#1E9BEA"/><rect x="4" y="10" width="1.1" height="1.1" fill="#8A8A8A"/><path d="M6.2 8.6 H11 M6.2 10.6 H11" stroke="#9A9A9A" stroke-width="0.9"/><rect x="6" y="13.6" width="3" height="1.3" fill="#2CB4F4"/><rect x="10" y="13.8" width="3" height="1" fill="#C8C8C8"/></svg>
<svg style="left:852px;top:281px" width="16" height="16" viewBox="0 0 16 16" ><path d="M1.8 1 H5.2 L6.6 6 V10 H0.4 V6 Z" fill="#C9C9C9" stroke="#3C4656" stroke-width="1"/><rect x="0.4" y="9" width="6.2" height="1.6" fill="#54657C"/><path d="M0.6 11.2 Q3.5 10.2 6.4 11.2 V14 Q3.5 16.4 0.6 14 Z" fill="#2E9CF0"/><path d="M2.2 12 L4.8 13.6" stroke="#E8F6FF" stroke-width="1.6"/><path d="M0.4 14.4 Q3.5 16.6 6.6 14.4" stroke="#3C4656" stroke-width="0.9" fill="none" stroke-dasharray="1.6 1"/><path d="M10.8 1 H14.2 L15.6 6 V10 H9.4 V6 Z" fill="#C9C9C9" stroke="#3C4656" stroke-width="1"/><rect x="9.4" y="9" width="6.2" height="1.6" fill="#54657C"/><path d="M9.6 11.2 Q12.5 10.2 15.4 11.2 V14 Q12.5 16.4 9.6 14 Z" fill="#2E9CF0"/><path d="M11.2 12 L13.8 13.6" stroke="#E8F6FF" stroke-width="1.6"/><path d="M9.4 14.4 Q12.5 16.6 15.6 14.4" stroke="#3C4656" stroke-width="0.9" fill="none" stroke-dasharray="1.6 1"/><rect x="6.6" y="3" width="2.8" height="6.6" fill="#BDBDBD" stroke="#3C4656" stroke-width="0.8"/></svg>
<svg style="left:853px;top:305px" width="14" height="15" viewBox="0 0 14 15" ><path d="M0 0 H14 V15 H0 Z" fill="#2A2A32"/><rect x="2" y="0" width="10" height="8.6" fill="#F4F5F8"/><path d="M2 8.2 H12" stroke="#C8C8D0" stroke-width="0.8"/><rect x="2.6" y="10.4" width="9" height="4.6" fill="#C4C4C8"/><rect x="4" y="11" width="2" height="3" fill="#2A2A32"/><rect x="9" y="10.4" width="2.6" height="4.6" fill="#9A9AA0"/></svg>
<svg style="left:1186px;top:357px" width="5" height="9" viewBox="0 0 5 9"><path d="M0 0 L5 4.5 L0 9 Z" fill="#000"/></svg>
<svg style="left:854px;top:379px" width="13" height="16" viewBox="0 0 13 16" ><path d="M0.5 0.5 H9.5 L12.5 3.5 V15.5 H0.5 Z" fill="#F7F7F7" stroke="#8E8E8E" stroke-width="1"/><path d="M9.5 0.5 V3.5 H12.5" fill="#fff" stroke="#A8A8A8" stroke-width="0.8"/><path d="M10 8.6 A3.7 3.7 0 1 0 8 12" stroke="#4CC94C" stroke-width="1.9" fill="none"/><path d="M7.4 9.4 H12.2 L10.4 12.8 Z" fill="#3CBE3C"/></svg>
<svg style="left:1186px;top:407px" width="5" height="9" viewBox="0 0 5 9"><path d="M0 0 L5 4.5 L0 9 Z" fill="#000"/></svg>
<svg style="left:853px;top:404px" width="13" height="16" viewBox="0 0 13 16" ><rect x="0" y="0" width="13" height="16" fill="#3E62D2"/><rect x="0" y="0" width="2.6" height="16" fill="#1F3CA8"/><path d="M10 0 H13 V16 H3 Q11 12 10 0 Z" fill="#2E50C4"/><rect x="0" y="15" width="13" height="1" fill="#1A3090"/><path d="M4.9 5 Q5.1 2.6 7.5 2.6 Q10.1 2.6 10.1 5 Q10.1 6.8 7.7 8 V10" stroke="#fff" stroke-width="1.9" fill="none"/><rect x="6.6" y="11.5" width="2" height="2" fill="#fff"/></svg>
<svg style="left:852px;top:458px" width="15" height="16" viewBox="0 0 15 16" ><rect x="0.5" y="0.5" width="14" height="15" rx="1.2" fill="#FDFDFD" stroke="#7F7F7F" stroke-width="1"/><path d="M1 2.2 H14" stroke="#C8C8C8" stroke-width="0.8"/><rect x="11.6" y="0.8" width="1.4" height="1.2" fill="#5C86C8"/><rect x="2.5" y="4.5" width="10" height="8" fill="#fff" stroke="#9A9A9A" stroke-width="1"/><path d="M3 5.6 H6 M7 5.6 H9.6" stroke="#BDBDBD" stroke-width="1"/><rect x="4" y="8" width="1.1" height="1.1" fill="#1E9BEA"/><rect x="4" y="10" width="1.1" height="1.1" fill="#8A8A8A"/><path d="M6.2 8.6 H11 M6.2 10.6 H11" stroke="#9A9A9A" stroke-width="0.9"/><rect x="6" y="13.6" width="3" height="1.3" fill="#2CB4F4"/><rect x="10" y="13.8" width="3" height="1" fill="#C8C8C8"/></svg>
<svg style="left:852px;top:482px" width="16" height="16" viewBox="0 0 16 16" ><path d="M2.5 1 H14 Q15.5 1 15.5 2.5 V14 H2.5 Z" fill="#F2F2F2" stroke="#8A8A8A" stroke-width="1"/><path d="M4 1 H14 Q15.4 1 15.4 2.4" stroke="#A0483C" stroke-width="1.2" fill="none"/><path d="M2.5 14 H15.5 V15.5 H2.5 Z" fill="#B4B4B4" stroke="#7A7A7A" stroke-width="0.8"/><circle cx="8.6" cy="7.6" r="4" fill="#EAF0FA" stroke="#6E6E78" stroke-width="1"/><path d="M8.6 5 V7.6 H11" stroke="#4A5A8C" stroke-width="1" fill="none"/><path d="M9.4 4.2 A3.6 3.6 0 0 1 12 7" stroke="#E8C860" stroke-width="1.4" fill="none"/><path d="M3 0 L3.8 2.2 L6 1.2 L4.8 3.2 L7 4 L4.8 4.8 L5.8 6.8 L3.6 5.6 L3 7.6 L2.2 5.6 L0.2 6.4 L1.2 4.4 L0 3.6 L1.6 3 L0.8 1 L2.4 2 Z" fill="#FBAA1C"/></svg>
<svg style="left:1186px;top:509px" width="5" height="9" viewBox="0 0 5 9"><path d="M0 0 L5 4.5 L0 9 Z" fill="#000"/></svg>
<svg style="left:852px;top:506px" width="16" height="16" viewBox="0 0 16 16" ><path d="M0.5 0.5 H6.5 V11.5 H0.5 Z" fill="#fff" stroke="#9A9A9A" stroke-width="1"/><path d="M2 4.4 H4 M2 6.6 H6 M2 8.6 H6" stroke="#5A90D0" stroke-width="1"/><path d="M6.5 3.5 H12 L15.5 7 V15.5 H6.5 Z" fill="#fff" stroke="#8E8E8E" stroke-width="1"/><path d="M12 3.5 V7 H15.5" fill="none" stroke="#9A9A9A" stroke-width="0.9"/><path d="M8 8.6 H10 M8 10.6 H14 M8 12.6 H14" stroke="#3A78C8" stroke-width="1.1"/></svg>
<svg style="left:853px;top:530px" width="14" height="15" viewBox="0 0 14 15" ><path d="M0 0 H14 V15 H0 Z" fill="#2A2A32"/><rect x="2" y="0" width="10" height="8.6" fill="#F4F5F8"/><path d="M2 8.2 H12" stroke="#C8C8D0" stroke-width="0.8"/><rect x="2.6" y="10.4" width="9" height="4.6" fill="#C4C4C8"/><rect x="4" y="11" width="2" height="3" fill="#2A2A32"/><rect x="9" y="10.4" width="2.6" height="4.6" fill="#9A9AA0"/></svg>
<svg style="left:854px;top:555px" width="13" height="16" viewBox="0 0 13 16" ><path d="M0.5 0.5 H9.5 L12.5 3.5 V15.5 H0.5 Z" fill="#F7F7F7" stroke="#8E8E8E" stroke-width="1"/><path d="M9.5 0.5 V3.5 H12.5" fill="#fff" stroke="#A8A8A8" stroke-width="0.8"/><path d="M10 8.6 A3.7 3.7 0 1 0 8 12" stroke="#4CC94C" stroke-width="1.9" fill="none"/><path d="M7.4 9.4 H12.2 L10.4 12.8 Z" fill="#3CBE3C"/></svg>
<svg style="left:1186px;top:583px" width="5" height="9" viewBox="0 0 5 9"><path d="M0 0 L5 4.5 L0 9 Z" fill="#000"/></svg>
<svg style="left:853px;top:580px" width="13" height="16" viewBox="0 0 13 16" ><rect x="0" y="0" width="13" height="16" fill="#3E62D2"/><rect x="0" y="0" width="2.6" height="16" fill="#1F3CA8"/><path d="M10 0 H13 V16 H3 Q11 12 10 0 Z" fill="#2E50C4"/><rect x="0" y="15" width="13" height="1" fill="#1A3090"/><path d="M4.9 5 Q5.1 2.6 7.5 2.6 Q10.1 2.6 10.1 5 Q10.1 6.8 7.7 8 V10" stroke="#fff" stroke-width="1.9" fill="none"/><rect x="6.6" y="11.5" width="2" height="2" fill="#fff"/></svg>
<div style="left:852px;top:204px;width:342px;height:1px;background:#E6E6E6;"></div>
<div style="left:852px;top:349px;width:342px;height:1px;background:#E6E6E6;"></div>
<div style="left:852px;top:374px;width:342px;height:1px;background:#E6E6E6;"></div>
<div style="left:852px;top:399px;width:342px;height:1px;background:#E6E6E6;"></div>
<div style="left:852px;top:550px;width:342px;height:1px;background:#E6E6E6;"></div>
<div style="left:852px;top:575px;width:342px;height:1px;background:#E6E6E6;"></div>
<div style="left:8px;top:849px;width:1193px;height:1px;background:#D7D7D7;"></div>
<div style="left:980px;top:851px;width:1px;height:20px;background:#D2D2D2;"></div>
<div style="left:1113px;top:851px;width:1px;height:20px;background:#D2D2D2;"></div>
<div style="left:1198px;top:851px;width:1px;height:20px;background:#D2D2D2;"></div>
<div style="left:8px;top:872px;width:1193px;height:1px;background:#D6B25A;"></div>
<span class="t" style="left:537.42px;top:7.80px;font-size:15px;color:#222;transform:scaleX(1.0282);">Просмотр событий</span>
<span class="t" style="left:18.39px;top:33.84px;transform:scaleX(0.9706);">Файл</span>
<span class="t" style="left:62.80px;top:33.84px;transform:scaleX(0.9846);">Действие</span>
<span class="t" style="left:129.56px;top:33.84px;transform:scaleX(0.9384);">Вид</span>
<span class="t" style="left:165.97px;top:33.84px;transform:scaleX(0.9687);">Справка</span>
<span class="t" style="left:34.27px;top:85.84px;transform:scaleX(1.0256);width:165.00px;overflow:hidden;">Просмотр событий (Локальный)</span>
<span class="t" style="left:52.84px;top:103.84px;transform:scaleX(0.9596);width:157.00px;overflow:hidden;">Настраиваемые представления</span>
<span class="t" style="left:53.44px;top:121.84px;transform:scaleX(1.0054);">Журналы Windows</span>
<span class="t" style="left:71.97px;top:139.84px;transform:scaleX(1.0290);">Приложение</span>
<span class="t" style="left:72.01px;top:157.84px;transform:scaleX(0.9867);">Безопасность</span>
<span class="t" style="left:71.90px;top:175.84px;transform:scaleX(0.9823);">Установка</span>
<span class="t" style="left:72.48px;top:193.84px;transform:scaleX(0.9600);">Система</span>
<span class="t" style="left:72.01px;top:211.84px;transform:scaleX(0.9897);width:132.86px;overflow:hidden;">Перенаправленные события</span>
<span class="t" style="left:53.44px;top:229.84px;width:149.96px;overflow:hidden;">Журналы приложений и служб</span>
<span class="t" style="left:52.75px;top:247.84px;transform:scaleX(1.0504);">Подписки</span>
<span class="t" style="left:215.38px;top:86.84px;font-weight:700;color:#fff;transform:scaleX(0.9282);">Установка</span>
<span class="t" style="left:287.48px;top:86.84px;color:#fff;transform:scaleX(0.9542);">Событий: 451</span>
<span class="t" style="left:218.99px;top:115.84px;">Уровень</span>
<span class="t" style="left:352.80px;top:115.84px;transform:scaleX(0.9707);">Дата и время</span>
<span class="t" style="left:536.74px;top:115.84px;transform:scaleX(1.0620);">Источник</span>
<span class="t" style="left:642.91px;top:115.84px;transform:scaleX(0.9942);">Код события</span>
<span class="t" style="left:724.54px;top:115.84px;transform:scaleX(0.9584);">Категория зад...</span>
<span class="t" style="left:235.49px;top:137.84px;transform:scaleX(0.9447);">Сведения</span>
<span class="t" style="left:353.02px;top:137.84px;transform:scaleX(0.8935);">28.09.2015 20:02:21</span>
<span class="t" style="left:536.82px;top:137.84px;transform:scaleX(0.9752);">Servicing</span>
<span class="t" style="left:706.52px;top:137.84px;transform:scaleX(0.9000);">2</span>
<span class="t" style="left:724.95px;top:137.84px;transform:scaleX(0.9538);">(1)</span>
<span class="t" style="left:235.49px;top:156.84px;transform:scaleX(0.9447);">Сведения</span>
<span class="t" style="left:353.02px;top:156.84px;transform:scaleX(0.8935);">28.09.2015 20:02:21</span>
<span class="t" style="left:536.82px;top:156.84px;transform:scaleX(0.9752);">Servicing</span>
<span class="t" style="left:706.52px;top:156.84px;transform:scaleX(0.9000);">2</span>
<span class="t" style="left:724.95px;top:156.84px;transform:scaleX(0.9538);">(1)</span>
<span class="t" style="left:235.49px;top:175.84px;transform:scaleX(0.9447);">Сведения</span>
<span class="t" style="left:353.02px;top:175.84px;transform:scaleX(0.8935);">28.09.2015 20:02:21</span>
<span class="t" style="left:536.82px;top:175.84px;transform:scaleX(0.9752);">Servicing</span>
<span class="t" style="left:706.52px;top:175.84px;transform:scaleX(0.9000);">2</span>
<span class="t" style="left:724.95px;top:175.84px;transform:scaleX(0.9538);">(1)</span>
<span class="t" style="left:235.49px;top:194.84px;transform:scaleX(0.9447);">Сведения</span>
<span class="t" style="left:353.02px;top:194.84px;transform:scaleX(0.8935);">28.09.2015 20:02:21</span>
<span class="t" style="left:536.82px;top:194.84px;transform:scaleX(0.9752);">Servicing</span>
<span class="t" style="left:706.52px;top:194.84px;transform:scaleX(0.9000);">2</span>
<span class="t" style="left:724.95px;top:194.84px;transform:scaleX(0.9538);">(1)</span>
<span class="t" style="left:235.49px;top:213.84px;transform:scaleX(0.9447);">Сведения</span>
<span class="t" style="left:353.02px;top:213.84px;transform:scaleX(0.8935);">28.09.2015 20:02:21</span>
<span class="t" style="left:536.82px;top:213.84px;transform:scaleX(0.9752);">Servicing</span>
<span class="t" style="left:706.52px;top:213.84px;transform:scaleX(0.9000);">2</span>
<span class="t" style="left:724.95px;top:213.84px;transform:scaleX(0.9538);">(1)</span>
<span class="t" style="left:235.49px;top:232.84px;transform:scaleX(0.9447);">Сведения</span>
<span class="t" style="left:353.02px;top:232.84px;transform:scaleX(0.8935);">28.09.2015 20:02:21</span>
<span class="t" style="left:536.82px;top:232.84px;transform:scaleX(0.9752);">Servicing</span>
<span class="t" style="left:706.52px;top:232.84px;transform:scaleX(0.9000);">2</span>
<span class="t" style="left:724.95px;top:232.84px;transform:scaleX(0.9538);">(1)</span>
<span class="t" style="left:235.49px;top:251.84px;transform:scaleX(0.9447);">Сведения</span>
<span class="t" style="left:353.02px;top:251.84px;transform:scaleX(0.8937);">28.09.2015 20:01:32</span>
<span class="t" style="left:536.82px;top:251.84px;transform:scaleX(0.9752);">Servicing</span>
<span class="t" style="left:706.89px;top:251.84px;transform:scaleX(0.9000);">4</span>
<span class="t" style="left:724.95px;top:251.84px;transform:scaleX(0.9538);">(1)</span>
<span class="t" style="left:235.49px;top:270.84px;transform:scaleX(0.9447);">Сведения</span>
<span class="t" style="left:353.02px;top:270.84px;transform:scaleX(0.8932);">28.09.2015 20:01:30</span>
<span class="t" style="left:536.82px;top:270.84px;transform:scaleX(0.9752);">Servicing</span>
<span class="t" style="left:706.89px;top:270.84px;transform:scaleX(0.9000);">4</span>
<span class="t" style="left:724.95px;top:270.84px;transform:scaleX(0.9538);">(1)</span>
<span class="t" style="left:235.49px;top:289.84px;transform:scaleX(0.9447);">Сведения</span>
<span class="t" style="left:353.02px;top:289.84px;transform:scaleX(0.8938);">28.09.2015 20:01:29</span>
<span class="t" style="left:536.82px;top:289.84px;transform:scaleX(0.9752);">Servicing</span>
<span class="t" style="left:706.89px;top:289.84px;transform:scaleX(0.9000);">4</span>
<span class="t" style="left:724.95px;top:289.84px;transform:scaleX(0.9538);">(1)</span>
<span class="t" style="left:235.49px;top:308.84px;transform:scaleX(0.9447);">Сведения</span>
<span class="t" style="left:353.02px;top:308.84px;transform:scaleX(0.8936);">28.09.2015 20:01:28</span>
<span class="t" style="left:536.82px;top:308.84px;transform:scaleX(0.9752);">Servicing</span>
<span class="t" style="left:706.89px;top:308.84px;transform:scaleX(0.9000);">4</span>
<span class="t" style="left:724.95px;top:308.84px;transform:scaleX(0.9538);">(1)</span>
<span class="t" style="left:235.49px;top:327.84px;transform:scaleX(0.9447);">Сведения</span>
<span class="t" style="left:353.02px;top:327.84px;transform:scaleX(0.8936);">28.09.2015 20:01:28</span>
<span class="t" style="left:536.82px;top:327.84px;transform:scaleX(0.9752);">Servicing</span>
<span class="t" style="left:706.89px;top:327.84px;transform:scaleX(0.9000);">4</span>
<span class="t" style="left:724.95px;top:327.84px;transform:scaleX(0.9538);">(1)</span>
<span class="t" style="left:235.49px;top:346.84px;transform:scaleX(0.9447);">Сведения</span>
<span class="t" style="left:353.02px;top:346.84px;transform:scaleX(0.8937);">28.09.2015 20:01:27</span>
<span class="t" style="left:536.82px;top:346.84px;transform:scaleX(0.9752);">Servicing</span>
<span class="t" style="left:706.89px;top:346.84px;transform:scaleX(0.9000);">4</span>
<span class="t" style="left:724.95px;top:346.84px;transform:scaleX(0.9538);">(1)</span>
<span class="t" style="left:235.49px;top:365.84px;transform:scaleX(0.9447);">Сведения</span>
<span class="t" style="left:353.02px;top:365.84px;transform:scaleX(0.8925);">28.09.2015 19:06:54</span>
<span class="t" style="left:536.82px;top:365.84px;transform:scaleX(0.9752);">Servicing</span>
<span class="t" style="left:706.52px;top:365.84px;transform:scaleX(0.9000);">2</span>
<span class="t" style="left:724.95px;top:365.84px;transform:scaleX(0.9538);">(1)</span>
<span class="t" style="left:235.49px;top:384.84px;transform:scaleX(0.9447);">Сведения</span>
<span class="t" style="left:353.02px;top:384.84px;transform:scaleX(0.8925);">28.09.2015 19:06:54</span>
<span class="t" style="left:536.82px;top:384.84px;transform:scaleX(0.9752);">Servicing</span>
<span class="t" style="left:706.10px;top:384.84px;transform:scaleX(0.9000);">1</span>
<span class="t" style="left:724.95px;top:384.84px;transform:scaleX(0.9538);">(1)</span>
<span class="t" style="left:235.49px;top:403.84px;transform:scaleX(0.9447);">Сведения</span>
<span class="t" style="left:353.02px;top:403.84px;transform:scaleX(0.8937);">28.09.2015 19:06:52</span>
<span class="t" style="left:536.82px;top:403.84px;transform:scaleX(0.9752);">Servicing</span>
<span class="t" style="left:706.10px;top:403.84px;transform:scaleX(0.9000);">1</span>
<span class="t" style="left:724.95px;top:403.84px;transform:scaleX(0.9538);">(1)</span>
<span class="t" style="left:235.49px;top:422.84px;transform:scaleX(0.9447);">Сведения</span>
<span class="t" style="left:353.02px;top:422.84px;transform:scaleX(0.8937);">28.09.2015 19:06:52</span>
<span class="t" style="left:536.82px;top:422.84px;transform:scaleX(0.9752);">Servicing</span>
<span class="t" style="left:706.10px;top:422.84px;transform:scaleX(0.9000);">1</span>
<span class="t" style="left:724.95px;top:422.84px;transform:scaleX(0.9538);">(1)</span>
<span class="t" style="left:235.49px;top:441.84px;transform:scaleX(0.9447);">Сведения</span>
<span class="t" style="left:353.02px;top:441.84px;transform:scaleX(0.8935);">28.09.2015 19:06:51</span>
<span class="t" style="left:536.82px;top:441.84px;transform:scaleX(0.9752);">Servicing</span>
<span class="t" style="left:706.10px;top:441.84px;transform:scaleX(0.9000);">1</span>
<span class="t" style="left:724.95px;top:441.84px;transform:scaleX(0.9538);">(1)</span>
<span class="t" style="left:217.97px;top:469.24px;transform:scaleX(0.9698);">Событие 2, Servicing</span>
<span class="t" style="left:228.01px;top:497.84px;transform:scaleX(1.0254);">Общие</span>
<span class="t" style="left:279.47px;top:499.84px;transform:scaleX(1.0278);">Подробности</span>
<span class="t" style="left:238.47px;top:536.84px;transform:scaleX(0.9743);">Состояние пакета</span>
<span class="t" style="left:339.31px;top:536.84px;transform:scaleX(0.8934);">KB3084905</span>
<span class="t" style="left:398.00px;top:536.84px;">изменено на Установлено.</span>
<span class="t" style="left:232.70px;top:647.34px;">Имя журнала:</span>
<span class="t" style="left:323.20px;top:647.34px;transform:scaleX(0.9769);">Установка</span>
<span class="t" style="left:232.66px;top:671.34px;transform:scaleX(1.0444);">Источник:</span>
<span class="t" style="left:322.72px;top:671.34px;transform:scaleX(0.9814);">Servicing</span>
<span class="t" style="left:232.70px;top:695.34px;">Код</span>
<span class="t" style="left:323.17px;top:695.34px;">2</span>
<span class="t" style="left:233.20px;top:719.34px;transform:scaleX(0.9865);">Уровень:</span>
<span class="t" style="left:323.18px;top:719.34px;transform:scaleX(0.9559);">Сведения</span>
<span class="t" style="left:232.70px;top:743.34px;">Пользов.:</span>
<span class="t" style="left:323.18px;top:743.34px;transform:scaleX(0.9597);">СИСТЕМА</span>
<span class="t" style="left:232.71px;top:767.34px;transform:scaleX(0.9942);">Код операции:</span>
<span class="t" style="left:323.18px;top:767.34px;transform:scaleX(0.9559);">Сведения</span>
<span class="t" style="left:232.69px;top:791.34px;transform:scaleX(1.0147);">Подробности:</span>
<span class="t" style="left:480.70px;top:671.34px;transform:scaleX(0.9387);">Дата:</span>
<span class="t" style="left:590.02px;top:671.34px;transform:scaleX(0.8935);">28.09.2015 20:02:21</span>
<span class="t" style="left:480.52px;top:695.34px;transform:scaleX(0.9815);">Категория задачи:</span>
<span class="t" style="left:589.49px;top:695.34px;transform:scaleX(1.0077);">(1)</span>
<span class="t" style="left:480.50px;top:719.34px;transform:scaleX(0.9960);">Ключевые слова:</span>
<span class="t" style="left:480.47px;top:743.34px;transform:scaleX(1.0324);">Компьютер:</span>
<span class="t" style="left:590.03px;top:743.34px;transform:scaleX(1.0634);">cinquefoil</span>
<span class="t" style="left:326.37px;top:791.34px;color:#0000FF;transform:scaleX(0.9650);text-decoration:underline;">Справка в Интернете для </span>
<span class="t" style="left:851.70px;top:87.84px;font-weight:700;transform:scaleX(1.0090);">Действия</span>
<span class="t" style="left:853.89px;top:112.80px;font-size:15px;">Установка</span>
<span class="t" style="left:853.53px;top:434.80px;font-size:15px;transform:scaleX(0.9666);">Событие 2, Servicing</span>
<span class="t" style="left:925.41px;top:183.84px;transform:scaleX(0.9876);">настраиваемого</span>
<span class="t" style="left:1017.82px;top:183.84px;transform:scaleX(0.9798);">представления</span>
<span class="t" style="left:878.22px;top:135.84px;">Открыть сохраненный журнал...</span>
<span class="t" style="left:878.17px;top:159.84px;transform:scaleX(0.9647);">Создать настраиваемое представление...</span>
<span class="t" style="left:877.65px;top:183.84px;transform:scaleX(1.0485);">Импорт</span>
<span class="t" style="left:878.22px;top:208.84px;transform:scaleX(0.9968);">Очистить журнал...</span>
<span class="t" style="left:878.07px;top:232.84px;transform:scaleX(1.0070);">Фильтр текущего журнала...</span>
<span class="t" style="left:878.18px;top:256.84px;transform:scaleX(0.9586);">Свойства</span>
<span class="t" style="left:877.71px;top:280.84px;transform:scaleX(0.9872);">Найти...</span>
<span class="t" style="left:878.17px;top:304.84px;transform:scaleX(0.9798);">Сохранить все события как...</span>
<span class="t" style="left:877.72px;top:328.84px;transform:scaleX(0.9846);">Привязать задачу к журналу...</span>
<span class="t" style="left:877.77px;top:353.84px;transform:scaleX(0.9288);">Вид</span>
<span class="t" style="left:878.22px;top:378.84px;transform:scaleX(0.9968);">Обновить</span>
<span class="t" style="left:878.17px;top:403.84px;transform:scaleX(0.9751);">Справка</span>
<span class="t" style="left:878.16px;top:457.84px;transform:scaleX(0.9877);">Свойства событий</span>
<span class="t" style="left:877.72px;top:481.84px;transform:scaleX(0.9828);">Привязать задачу к событию...</span>
<span class="t" style="left:877.69px;top:505.84px;transform:scaleX(1.0127);">Копировать</span>
<span class="t" style="left:878.16px;top:529.84px;transform:scaleX(0.9884);">Сохранить выбранные события...</span>
<span class="t" style="left:878.22px;top:554.84px;transform:scaleX(0.9968);">Обновить</span>
<span class="t" style="left:878.17px;top:579.84px;transform:scaleX(0.9751);">Справка</span>
</div>
</body></html>
